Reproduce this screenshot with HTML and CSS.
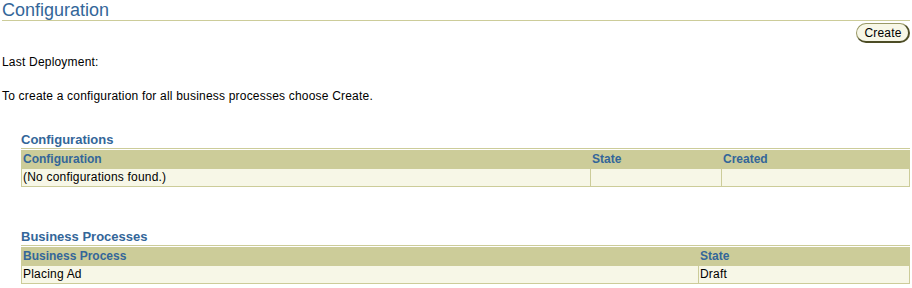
FILE: index.html
```html
<!DOCTYPE html>
<html>
<head>
<meta charset="utf-8">
<title>Configuration</title>
<link rel="stylesheet" href="styles.css">
</head>
<body>
<div class="page">
  <h1 class="title">Configuration</h1>
  <div class="actions"><button class="btn" type="button">Create</button></div>
  <p class="info info-first">Last Deployment:</p>
  <p class="info info-second">To create a configuration for all business processes choose Create.</p>

  <section class="sect sect-first">
    <h2 class="sect-title">Configurations</h2>
    <table class="grid">
      <thead>
        <tr>
          <th class="c-config">Configuration</th>
          <th class="c-state">State</th>
          <th>Created</th>
        </tr>
      </thead>
      <tbody>
        <tr>
          <td>(No configurations found.)</td>
          <td></td>
          <td></td>
        </tr>
      </tbody>
    </table>
  </section>

  <section class="sect sect-second">
    <h2 class="sect-title">Business Processes</h2>
    <table class="grid">
      <thead>
        <tr>
          <th class="c-process">Business Process</th>
          <th>State</th>
        </tr>
      </thead>
      <tbody>
        <tr>
          <td>Placing Ad</td>
          <td>Draft</td>
        </tr>
      </tbody>
    </table>
  </section>
</div>
</body>
</html>
```

FILE: styles.css
```css
html, body {
  margin: 0;
  padding: 0;
  background: #ffffff;
}

body {
  font-family: "Liberation Sans", Arial, sans-serif;
  font-size: 12px;
  color: #000000;
}

.page {
  padding: 0 2px 0 2px;
}

.title {
  margin: 0;
  font-size: 18px;
  font-weight: normal;
  line-height: 20px;
  color: #336699;
  border-bottom: 1px solid #cccc99;
}

.actions {
  display: flex;
  justify-content: flex-end;
  margin-top: 2px;
}

.btn {
  box-sizing: border-box;
  width: 54px;
  height: 20px;
  padding: 0 0 0 1px;
  font-family: "Liberation Sans", Arial, sans-serif;
  font-size: 12px;
  line-height: 16px;
  letter-spacing: 0.2px;
  color: #000000;
  background: #f7f7e7;
  border: 1px solid #999966;
  border-right: 2px solid #4d4d26;
  border-bottom: 2px solid #4d4d26;
  border-radius: 10px;
}

.info {
  margin: 0;
  line-height: 15px;
  letter-spacing: 0.2px;
}

.info-first {
  margin-top: 12px;
}

.info-second {
  margin-top: 19px;
}

.sect {
  padding-left: 19px;
}

.sect-first {
  margin-top: 28px;
}

.sect-second {
  margin-top: 42px;
}

.sect-title {
  margin: 0 0 1px;
  font-size: 13px;
  font-weight: bold;
  line-height: 16px;
  color: #336699;
  border-bottom: 1px solid #cccc99;
}

.grid {
  width: 100%;
  border-collapse: collapse;
}

.grid th,
.grid td {
  padding: 1px 1px;
  line-height: 15px;
  text-align: left;
  font-size: 12px;
  border: 1px solid #cccc99;
}

.grid th {
  background: #cccc99;
  color: #336699;
  font-weight: bold;
}

.grid th + th {
  border-left-color: #f7f7e7;
}

.grid td {
  background: #f7f7e7;
  color: #000000;
  letter-spacing: 0.2px;
}

.c-config {
  width: 566px;
}

.c-state {
  width: 128px;
}

.c-process {
  width: 674px;
}
```
